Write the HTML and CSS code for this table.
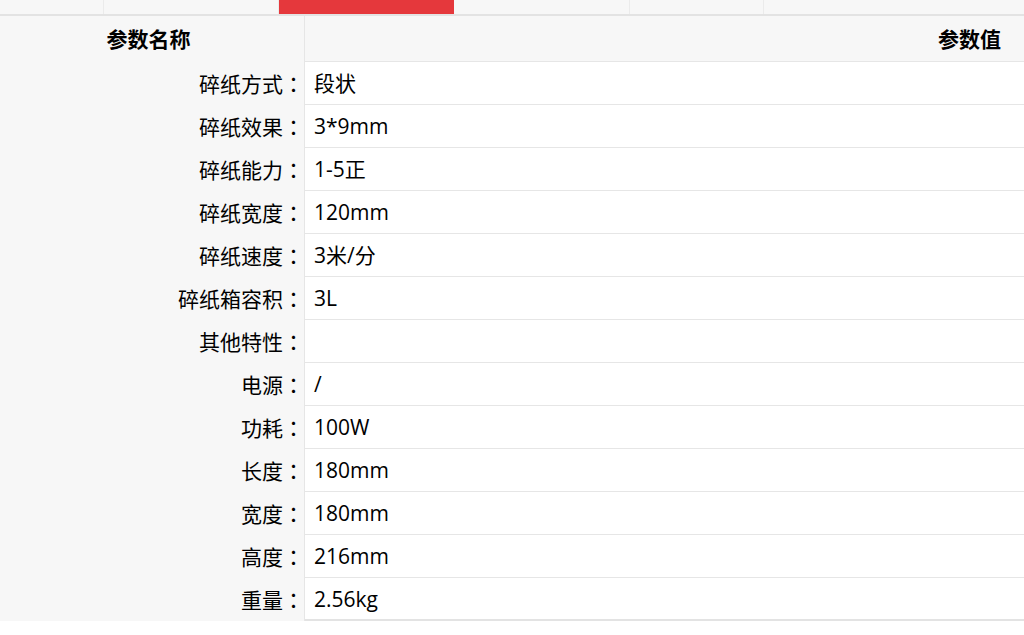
FILE: index.html
```html
<!DOCTYPE html>
<html lang="zh-CN">
<head>
<meta charset="utf-8">
<link rel="stylesheet" href="styles.css">
</head>
<body>
<div class="tabs">
  <div class="tab t1"></div>
  <div class="tab t2"></div>
  <div class="tab t3 active"></div>
  <div class="tab t4"></div>
  <div class="tab t5"></div>
  <div class="tab t6"></div>
</div>
<div class="spec">
  <div class="row head"><div class="k">参数名称</div><div class="v">参数值</div></div>
  <div class="row"><div class="k">碎纸方式<span class="colon" lang="zh-TW">：</span></div><div class="v">段状</div></div>
  <div class="row"><div class="k">碎纸效果<span class="colon" lang="zh-TW">：</span></div><div class="v">3*9mm</div></div>
  <div class="row"><div class="k">碎纸能力<span class="colon" lang="zh-TW">：</span></div><div class="v">1-5正</div></div>
  <div class="row"><div class="k">碎纸宽度<span class="colon" lang="zh-TW">：</span></div><div class="v">120mm</div></div>
  <div class="row"><div class="k">碎纸速度<span class="colon" lang="zh-TW">：</span></div><div class="v">3米/分</div></div>
  <div class="row"><div class="k">碎纸箱容积<span class="colon" lang="zh-TW">：</span></div><div class="v">3L</div></div>
  <div class="row"><div class="k">其他特性<span class="colon" lang="zh-TW">：</span></div><div class="v"></div></div>
  <div class="row"><div class="k">电源<span class="colon" lang="zh-TW">：</span></div><div class="v">/</div></div>
  <div class="row"><div class="k">功耗<span class="colon" lang="zh-TW">：</span></div><div class="v">100W</div></div>
  <div class="row"><div class="k">长度<span class="colon" lang="zh-TW">：</span></div><div class="v">180mm</div></div>
  <div class="row"><div class="k">宽度<span class="colon" lang="zh-TW">：</span></div><div class="v">180mm</div></div>
  <div class="row"><div class="k">高度<span class="colon" lang="zh-TW">：</span></div><div class="v">216mm</div></div>
  <div class="row last"><div class="k">重量<span class="colon" lang="zh-TW">：</span></div><div class="v">2.56kg</div></div>
</div>
</body>
</html>
```
FILE: styles.css
```css
html, body {
  margin: 0;
  padding: 0;
  background: #fff;
}
body {
  font-family: "Open Sans", "Noto Sans CJK SC", sans-serif;
  color: #000;
  width: 1024px;
}
.tabs {
  display: flex;
  height: 14px;
  background: #f7f7f7;
  border-bottom: 2px solid #e3e3e3;
}
.tab {
  height: 14px;
  border-right: 1px solid #ebebeb;
  box-sizing: border-box;
}
.t1 { width: 104px; }
.t2 { width: 175px; }
.t3 { width: 175px; border-right: none; }
.t4 { width: 176px; }
.t5 { width: 134px; }
.t6 { flex: 1; border-right: none; }
.active { background: #e5383c; }
.row {
  display: grid;
  grid-template-columns: 305px 1fr;
  height: 43px;
  border-bottom: 1px solid #e6e6e6;
  box-sizing: border-box;
  font-size: 21px;
}
.row.last {
  border-bottom: 2px solid #e3e3e3;
}
.k {
  background: #f7f7f7;
  border-right: 1px solid #e6e6e6;
  text-align: right;
  padding-right: 0;
  line-height: 42px;
  white-space: nowrap;
}
.colon {
  font-family: "Noto Sans CJK TC", "Noto Sans CJK SC", sans-serif;
}
.v {
  padding-left: 9px;
  line-height: 43px;
}
.row.head {
  height: 46px;
  background: #f7f7f7;
  font-weight: bold;
}
.row.head .k {
  text-align: center;
  padding-right: 7px;
  line-height: 46px;
}
.row.head .v {
  text-align: right;
  padding-right: 23px;
  line-height: 46px;
}
```
